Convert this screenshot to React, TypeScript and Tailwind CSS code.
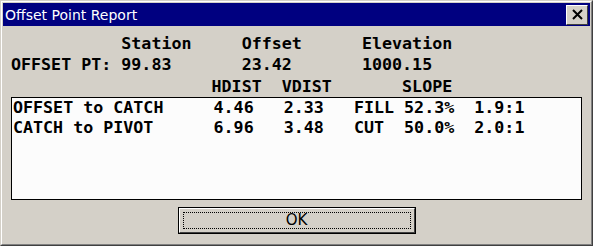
import React from 'react';

const mono = { fontFamily: '"DejaVu Sans Mono", "Liberation Mono", monospace' };

const headerLines = [
    '           Station     Offset      Elevation',
    'OFFSET PT: 99.83       23.42       1000.15',
];

const rows = [
    'OFFSET to CATCH     4.46   2.33   FILL 52.3%  1.9:1',
    'CATCH to PIVOT      6.96   3.48   CUT  50.0%  2.0:1',
];

const OffsetPointReport: React.FC = () => {
    return (
        <div className="w-[593px] h-[246px] bg-[#d4d0c8]">
            <div className="w-[593px] h-[246px] border border-t-[#d4d0c8] border-l-[#d4d0c8] border-r-[#404040] border-b-[#404040]">
                <div className="h-full border border-t-white border-l-white border-r-[#808080] border-b-[#808080] p-px flex flex-col">
                    {/* title bar */}
                    <div className="h-[23px] bg-[#000080] flex items-center justify-between pl-[2px] pr-[2px]">
                        <span
                            className="text-white text-[14px] leading-none"
                            style={{ fontFamily: '"DejaVu Sans", Verdana, sans-serif' }}
                        >
                            Offset Point Report
                        </span>
                        <button className="w-[22px] h-[20px] bg-[#d4d0c8] border border-t-white border-l-white border-r-[#404040] border-b-[#404040] flex items-center justify-center">
                            <svg width="11" height="11" viewBox="0 0 11 11">
                                <path d="M1 1 L10 10 M10 1 L1 10" stroke="#000" strokeWidth="2" />
                            </svg>
                        </button>
                    </div>

                    {/* body */}
                    <div className="flex-1 flex flex-col px-[8px] pt-[7px]">
                        <div className="font-bold text-[16.67px] leading-[21px] text-black whitespace-pre" style={mono}>
                            {headerLines.map((l, i) => (
                                <div key={i}>{l}</div>
                            ))}
                            <div className="pt-[2px] leading-[20px]">{'                    HDIST  VDIST       SLOPE'}</div>
                        </div>

                        <div className="h-[103px] bg-[#fcfcfc] border border-black pl-[1px] font-bold text-[16.67px] leading-[20px] text-black whitespace-pre" style={mono}>
                            {rows.map((r, i) => (
                                <div key={i}>{r}</div>
                            ))}
                        </div>

                        <div className="flex justify-center mt-[7px]">
                            <button className="w-[238px] h-[27px] border border-black bg-[#d4d0c8] p-0">
                                <div className="w-full h-full border border-t-white border-l-white border-r-[#404040] border-b-[#404040] p-[3px]">
                                    <div
                                        className="w-full h-full border border-dotted border-black flex items-center justify-center text-[15px] text-black"
                                        style={{ fontFamily: '"DejaVu Sans", Verdana, sans-serif' }}
                                    >
                                        OK
                                    </div>
                                </div>
                            </button>
                        </div>
                    </div>
                </div>
            </div>
        </div>
    );
};

export default function App() {
    return <OffsetPointReport />;
}
